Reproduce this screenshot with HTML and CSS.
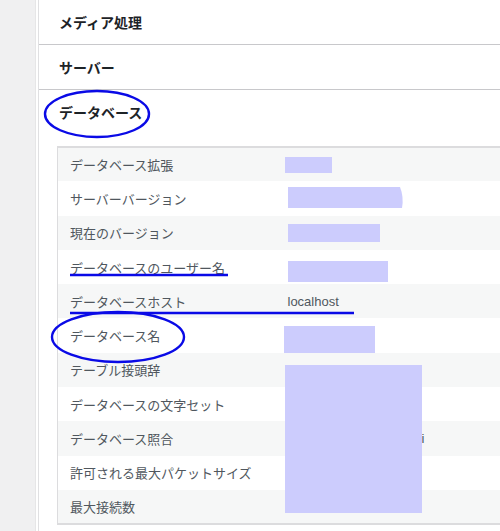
FILE: index.html
```html
<!DOCTYPE html>
<html lang="ja">
<head>
    <meta charset="UTF-8">
    <meta name="viewport" content="width=device-width, initial-scale=1.0">
    <title>サイトヘルス情報</title>
    <link rel="stylesheet" href="styles.css">
</head>
<body>
    <div class="page">
        <div class="sidebar"></div>
        <div class="panel">
            <div class="section"><h3>メディア処理</h3></div>
            <div class="section"><h3>サーバー</h3></div>
            <div class="section open">
                <h3>データベース</h3>
                <div class="section-body">
                    <table class="info">
                        <tr><td>データベース拡張</td><td>mysqli</td></tr>
                        <tr><td>サーバーバージョン</td><td></td></tr>
                        <tr><td>現在のバージョン</td><td></td></tr>
                        <tr><td>データベースのユーザー名</td><td></td></tr>
                        <tr><td>データベースホスト</td><td>localhost</td></tr>
                        <tr><td>データベース名</td><td></td></tr>
                        <tr><td>テーブル接頭辞</td><td></td></tr>
                        <tr><td>データベースの文字セット</td><td></td></tr>
                        <tr><td>データベース照合</td><td class="tight">utf8mb4_unicode_520_ci</td></tr>
                        <tr><td>許可される最大パケットサイズ</td><td></td></tr>
                        <tr><td>最大接続数</td><td></td></tr>
                    </table>
                </div>
            </div>
        </div>
    </div>

    <!-- 注釈とマスク -->
    <svg class="marks" width="500" height="531" viewBox="0 0 500 531">
        <g fill="#ccccfd">
            <rect x="285" y="157" width="47" height="16"/>
            <path d="M288 187 H400 Q404 197 402 208 H288 Z"/>
            <rect x="288" y="224" width="92" height="18"/>
            <rect x="288" y="261" width="100" height="21"/>
            <rect x="284" y="326" width="91" height="27"/>
            <rect x="285" y="365" width="137" height="148"/>
        </g>
        <g fill="none" stroke="#0a0ae6" stroke-width="2.4">
            <ellipse cx="97" cy="114" rx="52" ry="23"/>
            <ellipse cx="118" cy="337" rx="66" ry="25"/>
            <line x1="70" y1="275" x2="228" y2="275"/>
            <line x1="70" y1="313" x2="354" y2="313"/>
        </g>
    </svg>
</body>
</html>
```

FILE: styles.css
```css
body {
    margin: 0;
    font-family: "Noto Sans CJK JP", "Noto Sans", sans-serif;
    background-color: #fff;
    overflow: hidden;
}
.page {
    display: flex;
    width: 500px;
    height: 531px;
}
.sidebar {
    width: 35px;
    background-color: #f0f0f1;
    border-right: 1px solid #e6e6e7;
    flex-shrink: 0;
}
.panel {
    flex: 1;
    margin-left: 2px;
    border-left: 1px solid #e0e0e2;
    background-color: #fff;
    min-width: 0;
    overflow: hidden;
}
.section {
    border-bottom: 1px solid #c8c8cb;
}
.section.open {
    border-bottom: none;
}
.section h3 {
    margin: 0;
    height: 44px;
    line-height: 44px;
    padding-left: 20px;
    font-size: 14px;
    font-weight: bold;
    color: #1d2327;
}
.section-body {
    padding: 12px 0 0 18px;
}
.info {
    width: 100%;
    table-layout: fixed;
    border-collapse: collapse;
    border-top: 2px solid #dcdcde;
    border-left: 1px solid #dcdcde;
    border-bottom: 2px solid #dcdcde;
    font-size: 13px;
    color: #50575e;
}
.info td {
    height: 34.3px;
    padding: 0 12px;
    box-sizing: border-box;
    white-space: nowrap;
    overflow: hidden;
}
.info td:first-child {
    width: 218px;
}
.info td + td {
    font-family: "Liberation Sans", "Noto Sans CJK JP", sans-serif;
}
.info td.tight {
    letter-spacing: -0.4px;
}
.info tr:nth-child(odd) {
    background-color: #f6f7f7;
}
.marks {
    position: absolute;
    top: 0;
    left: 0;
    pointer-events: none;
}
```
